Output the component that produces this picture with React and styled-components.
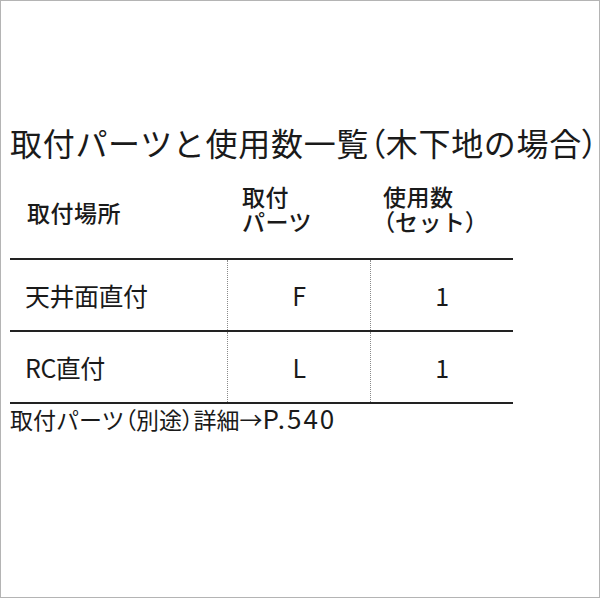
import React from 'react';
import styled, { createGlobalStyle } from 'styled-components';

const GlobalStyle = createGlobalStyle`
  html, body {
    margin: 0;
    padding: 0;
    background: #fff;
  }
  body {
    font-family: "Noto Sans CJK JP", "Noto Sans", sans-serif;
    color: #1a1a1a;
  }
`;

const Frame = styled.div`
  width: 600px;
  height: 598px;
  box-sizing: border-box;
  border: 1px solid #b4b4b4;
  padding: 120px 0 0 9px;
`;

const Title = styled.h1`
  margin: 0;
  font-size: 32px;
  font-weight: 400;
  line-height: 42px;
  letter-spacing: 0.7px;
  white-space: nowrap;
`;

// fullwidth brackets set tight, as in the printed table
const Paren = styled.span`
  font-feature-settings: "palt";
`;

const Latin = styled.span`
  font-size: 26px;
  letter-spacing: 2px;
`;

const Table = styled.div`
  width: 503px;
  margin-top: 12px;
`;

const Row = styled.div`
  display: grid;
  grid-template-columns: 217px 143px 143px;
  box-sizing: border-box;
  height: ${(props) => props.height}px;
  border-bottom: 2.5px solid #222;
`;

const Cell = styled.div`
  display: flex;
  align-items: center;
  justify-content: ${(props) => (props.center ? 'center' : 'flex-start')};
  padding-left: ${(props) => (props.center ? 0 : props.pad || 15)}px;
  border-left: ${(props) => (props.dotted ? '1px dotted #8a8a8a' : 'none')};
  font-size: 25px;
  letter-spacing: -0.5px;
  line-height: 1;
`;

const HeadCell = styled.div`
  display: flex;
  flex-direction: column;
  padding-left: ${(props) => props.pad}px;
  padding-top: ${(props) => props.top}px;
  font-size: 23px;
  font-weight: 500;
  line-height: 25px;
  letter-spacing: 0.5px;
`;

const Footer = styled.div`
  margin-top: 0;
  font-size: 23px;
  line-height: 28px;
  white-space: nowrap;
`;

const rows = [
  { place: '天井面直付', part: 'F', count: 1 },
  { place: 'RC直付', part: 'L', count: 1 },
];

export default function App() {
  return (
    <>
      <GlobalStyle />
      <Frame>
        <Title>
          取付パーツと使用数一覧<Paren>（</Paren>木下地の場合<Paren>）</Paren>
        </Title>
        <Table>
          <Row height={85}>
            <HeadCell pad={17} top={25}>取付場所</HeadCell>
            <HeadCell pad={15} top={9}>
              <span>取付</span>
              <span>パーツ</span>
            </HeadCell>
            <HeadCell pad={13} top={9}>
              <span>使用数</span>
              <span><Paren>（</Paren>セット<Paren>）</Paren></span>
            </HeadCell>
          </Row>
          {rows.map((r) => (
            <Row key={r.place} height={72}>
              <Cell pad={15}>{r.place}</Cell>
              <Cell center dotted>{r.part}</Cell>
              <Cell center dotted>{r.count}</Cell>
            </Row>
          ))}
        </Table>
        <Footer>
          取付パーツ<Paren>（</Paren>別途<Paren>）</Paren>詳細→<Latin>P.540</Latin>
        </Footer>
      </Frame>
    </>
  );
}
